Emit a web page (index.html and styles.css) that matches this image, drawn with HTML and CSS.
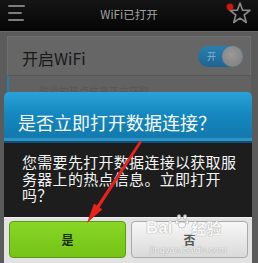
FILE: index.html
```html
<!DOCTYPE html>
<html lang="zh">
<head>
<meta charset="utf-8">
<link rel="stylesheet" href="styles.css">
</head>
<body>
<div class="screen">
  <header class="topbar">
    <div class="menu"><span class="l1"></span><span class="l2"></span><span class="l3"></span></div>
    <div class="apptitle">WiFi已打开</div>
    <div class="star">
      <svg width="24" height="24" viewBox="0 0 24 24"><polygon points="13,2 15.6,9.2 23,9.4 17.2,14 19.3,21.5 13,17.2 6.7,21.5 8.8,14 3,9.4 10.4,9.2" fill="none" stroke="#8a8a8a" stroke-width="1.6" stroke-linejoin="round"/></svg>
      <span class="dot"></span>
    </div>
  </header>
  <main class="content">
    <div class="card">
      <span class="label">开启WiFi</span>
      <span class="toggle"><span class="on">开</span><span class="knob"></span></span>
    </div>
    <div class="row2"><span class="ghost">附近的热点信息正在获取</span></div>
  </main>

  <section class="dialog">
    <div class="dtitle">是否立即打开数据连接？</div>
    <div class="dbody">您需要先打开数据连接以获取服务器上的热点信息。立即打开吗？</div>
    <div class="dbtns">
      <div class="btn yes">是</div>
      <div class="btn no">否</div>
    </div>
  </section>

  <div class="watermark">
    <div class="wm1">Bai<svg class="paw" width="14" height="20" viewBox="0 0 14 20"><g fill="#fdfdfd" stroke="#a0a0a0" stroke-width="0.6"><ellipse cx="4" cy="3" rx="1.8" ry="2.4"/><ellipse cx="10" cy="3" rx="1.8" ry="2.4"/><ellipse cx="1.8" cy="8" rx="1.5" ry="2"/><ellipse cx="12.2" cy="8" rx="1.5" ry="2"/><ellipse cx="7" cy="11" rx="3.6" ry="3"/></g></svg><span class="jy">经验</span></div>
    <div class="wm2">jingyan.baidu.com</div>
  </div>

  <svg class="arrow" width="258" height="263" viewBox="0 0 258 263">
    <polygon points="140.5,141 142,142 99.5,207.5 102.4,209.2 87,223 94,203.6 96.8,205.5 139.5,141" fill="#e8231b"/>
  </svg>
</div>
</body>
</html>
```
FILE: styles.css
```css
html, body { margin: 0; padding: 0; }
body { width: 258px; height: 263px; overflow: hidden; background: #5b5b5b; font-family: "Noto Sans CJK SC", "Noto Sans", sans-serif; }
.screen { position: relative; width: 258px; height: 263px; overflow: hidden; }

.topbar { height: 32px; background: linear-gradient(#151515, #050505); border-bottom: 1px solid #6a6a6a; display: flex; align-items: center; position: relative; box-sizing: border-box; }
.menu { width: 18px; height: 16px; margin-left: 8px; display: flex; flex-direction: column; justify-content: space-between; padding-top: 1px; margin-top: -6px; }
.menu span { display: block; height: 2px; background: #7d7d7d; border-radius: 1px; }
.menu .l1 { width: 17px; } .menu .l2 { width: 14px; } .menu .l3 { width: 16px; }
.apptitle { position: absolute; left: 0; right: 0; top: 7px; text-align: center; color: #a3a3a3; font-size: 11.5px; line-height: 14px; font-family: "Noto Sans CJK SC", sans-serif; }
.star { margin-left: auto; margin-right: 7px; margin-top: -6px; position: relative; width: 24px; height: 24px; }
.star svg { display: block; }
.dot { position: absolute; left: 0; top: 3px; width: 6px; height: 6px; border-radius: 50%; background: #d8140e; box-shadow: 0 0 2px #f03020; }

.content { padding: 4px 7px 0 7px; }
.card { height: 40px; background: #666; border: 1px solid #707070; border-bottom-color: #555; display: flex; align-items: center; padding: 0 10px 0 14px; box-sizing: border-box; }
.label { color: #181818; font-size: 16px; line-height: 20px; padding-top: 4px; }
.toggle { margin-left: auto; width: 45px; height: 21px; border-radius: 11px; background: linear-gradient(#2a7fae, #1d6590); display: flex; align-items: center; position: relative; margin-right: -3px; }
.on { color: #7fb6d6; font-size: 9px; margin-left: 9px; }
.knob { position: absolute; right: 0; top: 0; width: 21px; height: 21px; border-radius: 50%; background: radial-gradient(circle at 45% 40%, #9a9a9a, #7a7a7a); }
.row2 { height: 20px; border-left: 2px solid #2a7ea5; background: #626262; padding-left: 30px; }
.ghost { color: #575757; font-size: 10px; line-height: 26px; }

.dialog { position: absolute; left: 4px; top: 92px; width: 248px; height: 171px; display: flex; flex-direction: column; }
.dtitle { height: 51px; box-sizing: border-box; border-radius: 5px 5px 0 0; background: linear-gradient(#2aa2d8 0%, #1588c0 45%, #1277ab 100%); border-bottom: 2px solid #0f4f73; box-shadow: inset 0 -3px 0 #2c93c6; color: #f6fbff; font-size: 18px; line-height: 22px; padding: 19px 0 0 14px; white-space: nowrap; }
.dbody { height: 74px; box-sizing: border-box; background: #1d1d1d; color: #f4f4f4; font-size: 15px; line-height: 16.6px; letter-spacing: 0.3px; padding: 11px 10px 0 18px; }
.dbtns { flex: 1; background: #e2e2e2; display: flex; gap: 5px; padding: 3px 4px 5px 5px; box-sizing: border-box; border-top: 1px solid #f0f0f0; }
.btn { flex: 1; border-radius: 4px; display: flex; align-items: center; justify-content: center; font-size: 12px; font-weight: bold; }
.yes { background: linear-gradient(#88d626, #74c316); border: 1px solid #5d9a14; color: #1b2f05; }
.no { background: linear-gradient(#f7f7f7, #dadada); border: 1px solid #a9a9a9; color: #555; }

.watermark { position: absolute; left: 146px; top: 214px; width: 100px; color: #fbfbfb; text-shadow: 0 0 1px #9a9a9a, 0 0 1px #9a9a9a; opacity: 0.85; pointer-events: none; }
.wm1 { display: flex; align-items: flex-end; font-family: "Liberation Sans", sans-serif; font-size: 17px; line-height: 20px; font-weight: bold; white-space: nowrap; }
.paw { margin: 0 2px 4px 3px; }
.jy { font-family: "Noto Sans CJK SC", sans-serif; font-size: 15px; line-height: 20px; }
.wm2 { font-family: "Liberation Sans", sans-serif; font-size: 9.5px; line-height: 12px; margin-top: 6px; padding-left: 4px; white-space: nowrap; }

.arrow { position: absolute; left: 0; top: 0; pointer-events: none; }
```
